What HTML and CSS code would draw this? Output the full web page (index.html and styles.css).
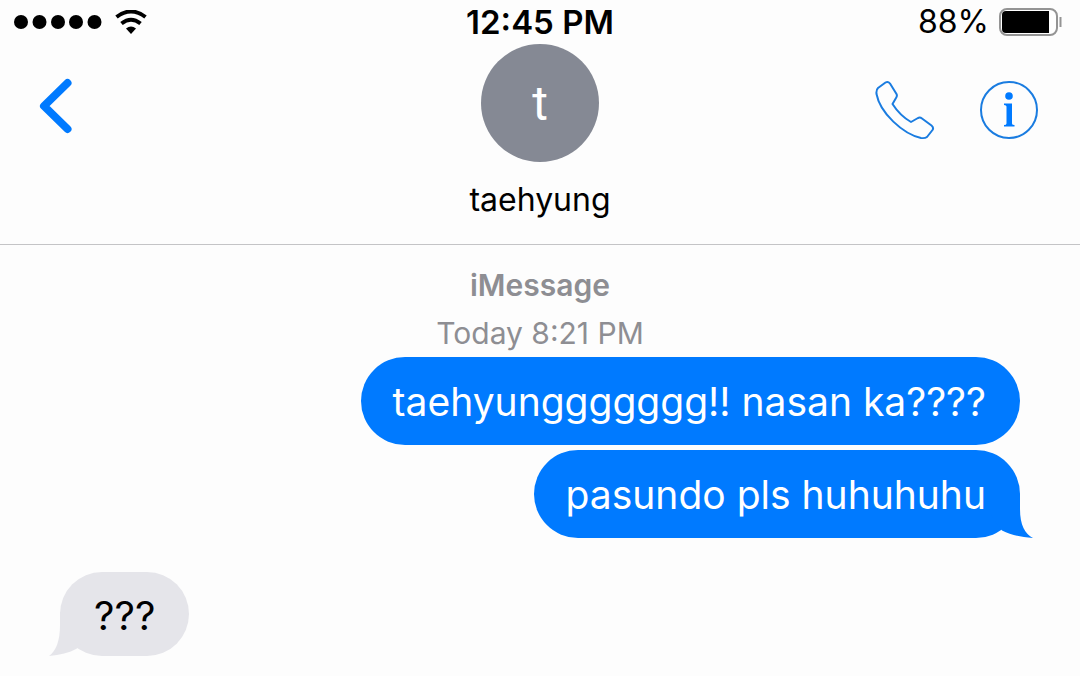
FILE: index.html
```html
<!DOCTYPE html>
<html lang="tl">

	<head>
		<meta charset="UTF-8">
		<meta name="viewport" content="width=device-width, initial-scale=1">
		<title>taehyung</title>
		<link rel="stylesheet" href="styles.css">
	</head>

	<body>
		<header class="header">
			<!-- status bar -->
			<div class="status">
				<div class="signal">
					<svg class="dots" width="88" height="14" viewBox="0 0 88 14">
						<circle cx="7" cy="7" r="7" />
						<circle cx="25.5" cy="7" r="7" />
						<circle cx="44" cy="7" r="7" />
						<circle cx="62" cy="7" r="7" />
						<circle cx="80.5" cy="7" r="7" />
					</svg>
					<svg class="wifi" width="32" height="24" viewBox="0 0 32 24">
						<path d="M1.500 7Q16-4 30.500 7" />
						<path d="M6.500 13.500Q16 6 25.500 13.500" />
						<path class="wifi-dot" d="M11 18.500Q16 14.500 21 18.500L16 24Z" />
					</svg>
				</div>
				<time class="clock">12:45 PM</time>
				<div class="power">
					<span>88%</span>
					<svg width="63" height="28" viewBox="0 0 63 28">
						<rect class="battery-case" x="1" y="1" width="57" height="26" rx="7" />
						<path d="M7 3H50V25H7Q3 25 3 21V7Q3 3 7 3Z" />
						<path class="battery-tip" d="M61.500 9V19" />
					</svg>
				</div>
			</div>

			<!-- contact -->
			<div class="nav">
				<button class="icon-btn back" type="button" aria-label="Back">
					<svg width="34" height="56" viewBox="0 0 34 56">
						<path d="M29.500 5L6 28L29.500 51" />
					</svg>
				</button>
				<div class="contact">
					<div class="avatar">t</div>
					<h1 class="name">taehyung</h1>
				</div>
				<div class="actions">
					<button class="icon-btn" type="button" aria-label="Call">
						<svg width="60" height="60" viewBox="0 0 60 60">
							<path d="M3 8L10.500 2.500Q13 1 15 3.500L21.500 14Q22.500 16 21 18L17.500 24C22 31 29 38 36 42L43 38Q45 37 47 38.500L56.500 45.500Q59 47.500 57.500 50L52 57Q50 58.500 46 58C28 54 5 33 1.500 14Q1 10 3 8Z" />
						</svg>
					</button>
					<button class="icon-btn" type="button" aria-label="Info">
						<svg width="60" height="60" viewBox="0 0 60 60">
							<circle cx="30" cy="30" r="28" />
							<circle class="solid" cx="30" cy="16" r="3.800" />
							<path class="solid" d="M25 23.500H33V43.500Q33 45 35.500 45V46.500H25V45Q27.500 45 27.500 43.500V26.500Q27.500 25 25 25Z" />
						</svg>
					</button>
				</div>
			</div>
		</header>

		<main class="chat">
			<div class="stamp">
				<strong>iMessage</strong>
				<span>Today 8:21 PM</span>
			</div>
			<p class="bubble sent">taehyunggggggg!! nasan ka????</p>
			<p class="bubble sent">pasundo pls huhuhuhu
				<svg class="tail" width="43" height="44" viewBox="0 0 43 44">
					<path d="M30 0V15C30 31 35 40 43 44C30 43 21 41 12 36.500L0 20V0Z" />
				</svg>
			</p>
			<p class="bubble received">???
				<svg class="tail" width="43" height="44" viewBox="0 0 43 44">
					<path d="M11 0V13C11 29 7 39 0 44C11 43 20 41 28 36.500L43 20V0Z" />
				</svg>
			</p>
		</main>
	</body>

</html>
```

FILE: styles.css
```css
* {
	box-sizing: border-box;
	margin: 0;
	padding: 0;
}

body {
	background-color: #fdfdfd;
	color: #000;
	font-family: Inter, "Liberation Sans", sans-serif;
}

svg {
	display: block;
}

.header {
	border-bottom: 1px solid #c4c4c6;
	padding-bottom: 24px;
}

/* status bar */
.status {
	display: grid;
	grid-template-columns: 1fr auto 1fr;
	align-items: center;
	height: 44px;
	padding: 0 14px;
	font-size: 32px;
	line-height: 40px;
}

.signal,
.power {
	display: flex;
	align-items: center;
}

.signal {
	gap: 13px;
}

.power {
	justify-content: flex-end;
	gap: 10px;
	padding-right: 4px;
}

.clock {
	font-size: 33px;
	font-weight: 600;
}

.wifi {
	fill: none;
	stroke: #000;
	stroke-width: 4;
}

.wifi-dot {
	fill: #000;
	stroke: none;
}

.battery-case {
	fill: #fff;
	stroke: #949494;
	stroke-width: 2;
}

.battery-tip {
	fill: none;
	stroke: #949494;
	stroke-width: 2;
}

/* contact */
.nav {
	display: grid;
	grid-template-columns: 1fr auto 1fr;
	padding: 0 38px;
}

.icon-btn {
	border: none;
	background: none;
	cursor: pointer;
}

.icon-btn svg {
	fill: none;
	stroke: #1a7ce0;
	stroke-width: 2;
	stroke-linejoin: round;
}

.icon-btn .solid {
	fill: #007aff;
	stroke: none;
}

.back {
	justify-self: start;
	align-self: start;
	margin-top: 34px;
}

.icon-btn.back svg {
	stroke: #007aff;
	stroke-width: 8;
	stroke-linecap: round;
}

.contact {
	display: flex;
	flex-direction: column;
	align-items: center;
	gap: 18px;
}

.avatar {
	width: 118px;
	height: 118px;
	border-radius: 50%;
	background-color: #858994;
	color: #fff;
	font-family: Roboto, sans-serif;
	font-size: 48px;
	line-height: 120px;
	text-align: center;
}

.name {
	font-size: 32px;
	font-weight: 400;
	line-height: 40px;
}

.actions {
	display: flex;
	justify-content: flex-end;
	align-items: flex-start;
	gap: 44px;
	padding: 36px 3px 0 0;
}

/* messages */
.chat {
	display: flex;
	flex-direction: column;
	padding: 16px 60px 20px;
}

.stamp {
	display: flex;
	flex-direction: column;
	align-items: center;
	color: #8e8e93;
	font-size: 30px;
	line-height: 48px;
}

.stamp strong {
	font-weight: 600;
}

.bubble {
	position: relative;
	padding: 21px 34px 19px 32px;
	border-radius: 44px;
	font-size: 39px;
	line-height: 48px;
}

.sent {
	align-self: flex-end;
	margin-bottom: 5px;
	background-color: #007aff;
	color: #fff;
}

.received {
	align-self: flex-start;
	margin-top: 29px;
	padding: 20px 34px 16px;
	background-color: #e5e5ea;
	font-size: 40px;
}

.tail {
	position: absolute;
	bottom: 0;
}

.sent .tail {
	right: -13px;
	fill: #007aff;
}

.received .tail {
	left: -11px;
	fill: #e5e5ea;
}
```
